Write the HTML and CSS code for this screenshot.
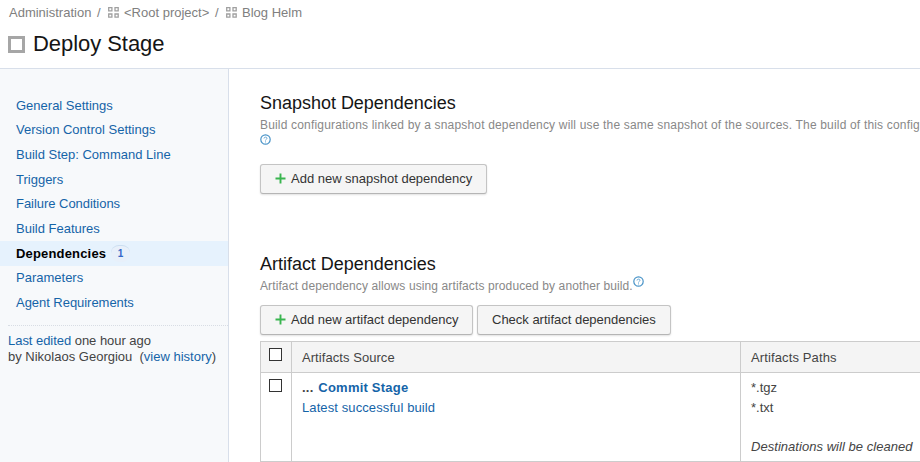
FILE: index.html
```html
<!DOCTYPE html>
<html lang="en">
<head>
<meta charset="utf-8">
<title>Deploy Stage</title>
<link rel="stylesheet" href="styles.css">
</head>
<body>
<svg class="defs" width="0" height="0">
  <symbol id="project" viewBox="0 0 11 11"><path d="M.7.7h3.2v3.2H.7zM7 .7h3.2v3.2H7zM.7 7h3.2v3.2H.7zM7 7h3.2v3.2H7z" fill="none" stroke="#a0a0a0" stroke-width="1.3"/></symbol>
  <symbol id="help" viewBox="0 0 11 11"><circle cx="5.5" cy="5.5" r="4.7" fill="#fff" stroke="#4a94c8" stroke-width="1.2"/><path d="M4 4.5C4 2.7 7 2.7 7 4.3C7 5.3 5.5 5.3 5.5 6.5M5.5 7.4v1" fill="none" stroke="#6aa8d4" stroke-width="1"/></symbol>
  <symbol id="plus" viewBox="0 0 11 11"><path d="M5.5 .5v10M.5 5.5h10" stroke="#39b54f" stroke-width="1.9"/></symbol>
</svg>
<header>
  <nav class="crumbs">
    <span class="c-admin">Administration</span><span class="slash">/</span>
    <svg class="project"><use href="#project"/></svg><span class="c-root">&lt;Root project&gt;</span><span class="slash">/</span>
    <svg class="project"><use href="#project"/></svg><span class="c-blog">Blog Helm</span>
  </nav>
  <div class="title"><i class="square"></i><h1>Deploy Stage</h1></div>
</header>
<div class="layout">
  <aside>
    <ul class="menu">
      <li>General Settings</li>
      <li>Version Control Settings</li>
      <li>Build Step: Command Line</li>
      <li>Triggers</li>
      <li class="tight">Failure Conditions</li>
      <li>Build Features</li>
      <li class="active"><span>Dependencies</span><b class="badge">1</b></li>
      <li>Parameters</li>
      <li class="tight">Agent Requirements</li>
    </ul>
    <div class="edited">
      <div class="tight"><a>Last edited</a> one hour ago</div>
      <div>by Nikolaos Georgiou &nbsp;(<a>view history</a>)</div>
    </div>
  </aside>
  <main>
    <section class="snapshot">
      <h2>Snapshot Dependencies</h2>
      <p class="note n1">Build configurations linked by a snapshot dependency will use the same snapshot of the sources. The build of this config</p>
      <svg class="help"><use href="#help"/></svg>
      <div class="buttons"><button class="b1"><svg class="plus"><use href="#plus"/></svg><span>Add new snapshot dependency</span></button></div>
    </section>
    <section class="artifact">
      <h2>Artifact Dependencies</h2>
      <p class="note n2"><span>Artifact dependency allows using artifacts produced by another build.</span><svg class="help raised"><use href="#help"/></svg></p>
      <div class="buttons"><button class="b2"><svg class="plus"><use href="#plus"/></svg><span>Add new artifact dependency</span></button><button class="b3"><span>Check artifact dependencies</span></button></div>
      <div class="table">
        <div class="cell head check"><i class="box"></i></div>
        <div class="cell head">Artifacts Source</div>
        <div class="cell head paths">Artifacts Paths</div>
        <div class="cell check"><i class="box"></i></div>
        <div class="cell"><div class="stage"><strong>... <a>Commit Stage</a></strong></div><div class="latest"><a>Latest successful build</a></div></div>
        <div class="cell"><div>*.tgz</div><div>*.txt</div><em>Destinations will be cleaned</em></div>
      </div>
    </section>
  </main>
</div>
</body>
</html>
```
FILE: styles.css
```css
* { box-sizing: border-box; }
html, body { height: 462px; overflow: hidden; }
body { margin: 0; font: 13px/20px "Liberation Sans", Arial, sans-serif; color: #444; background: #fff; display: flex; flex-direction: column; }
h1, h2, p, ul { margin: 0; padding: 0; font-weight: 400; }
svg { flex: none; display: block; }
.defs { position: absolute; }
a { color: #1564a8; }
header { height: 69px; border-bottom: 1px solid #d8dfea; flex: none; }
.crumbs { display: flex; align-items: center; height: 25px; padding-left: 9px; color: #808080; white-space: nowrap; }
.slash { width: 4px; margin: 0 7px 0 6px; }
.c-admin { width: 82px; }
.c-root { width: 85px; }
.project { width: 11px; height: 11px; margin-right: 5px; }
.title { display: flex; align-items: center; height: 38px; padding-left: 8px; }
.square { width: 17px; height: 17px; border: 3px solid #a6a6a6; margin-right: 8px; }
h1 { font-size: 22px; line-height: 36px; letter-spacing: -.05px; color: #151515; white-space: nowrap; }
.layout { display: flex; flex: 1; min-height: 0; }
aside { width: 229px; flex: none; background: #f7f9fb; border-right: 1px solid #d8dfea; padding-top: 24px; }
.menu { list-style: none; }
.menu li { height: 24.67px; line-height: 25px; padding-left: 16px; color: #1564a8; display: flex; align-items: center; white-space: nowrap; }
.menu .active { background: #e6f2fd; color: #000; font-weight: 700; letter-spacing: .17px; }
.tight { letter-spacing: -.04px; }
.badge { width: 19px; height: 17px; margin-left: 5px; border-radius: 8px; border-top: 1px solid #ccdef0; background: #e8f0fa; font-size: 10px; line-height: 16px; color: #3568c8; text-align: center; }
.edited { margin: 10px 0 0 8px; border-top: 1px dotted #d8dde4; padding-top: 7px; line-height: 16px; white-space: nowrap; }
main { flex: 1; min-width: 0; padding: 24px 0 0 31px; overflow: hidden; }
h2 { font-size: 18px; line-height: 20px; letter-spacing: -.02px; color: #151515; white-space: nowrap; }
.snapshot { height: 161px; }
.note { font-size: 12px; line-height: 20px; height: 22px; padding-top: 2px; color: #888; white-space: nowrap; display: flex; }
.n1 { letter-spacing: .175px; }
.n2 { letter-spacing: .105px; }
.help { width: 11px; height: 11px; margin-top: -1px; }
.raised { margin-top: 0; }
.snapshot .buttons { margin-top: 19px; }
.buttons { display: flex; gap: 4px; }
.artifact .buttons { margin-top: 9px; }
button { height: 30px; border: 1px solid #c4c4c4; border-bottom-color: #b5b5b5; border-radius: 3px; background: #f5f5f5; box-shadow: 0 1px 2px rgba(0,0,0,.12); padding: 0 0 0 14px; font: 13px/20px "Liberation Sans", Arial, sans-serif; letter-spacing: -.01px; color: #333; display: flex; align-items: center; white-space: nowrap; }
.plus { width: 11px; height: 11px; margin: -1px 5px 0 0; }
.b1 { width: 227px; }
.b2 { width: 213px; }
.b3 { width: 194px; }
.table { display: grid; grid-template-columns: 31px 449px 220px; grid-template-rows: 31px 89px; margin-top: 6px; border-top: 1px solid #ccc; border-left: 1px solid #ccc; width: 700px; }
.cell { border-right: 1px solid #ccc; border-bottom: 1px solid #ccc; padding: 5px 10px; white-space: nowrap; }
.head { background: #f4f4f4; padding-top: 6px; letter-spacing: .06px; }
.paths { letter-spacing: .12px; }
.check { padding: 6px 8px; }
.box { display: block; width: 13px; height: 13px; border: 1px solid #333; background: #fff; }
.stage { letter-spacing: .22px; }
.stage a { margin-left: 1px; }
.latest { letter-spacing: .1px; }
em { display: block; margin-top: 19px; letter-spacing: .04px; }
```
